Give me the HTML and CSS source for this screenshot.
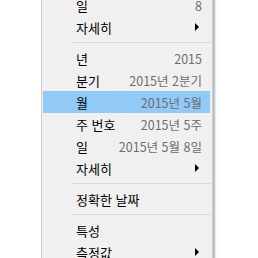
FILE: index.html
```html
<!DOCTYPE html>
<html lang="ko">
<head>
    <meta charset="UTF-8">
    <title>날짜 메뉴</title>
    <link rel="stylesheet" href="styles.css">
</head>
<body>
    <div class="menu">
        <div class="item"><span class="label">일</span><span class="value">8</span></div>
        <div class="item"><span class="label">자세히</span><span class="arrow"></span></div>
        <div class="separator"></div>
        <div class="item"><span class="label">년</span><span class="value">2015</span></div>
        <div class="item"><span class="label">분기</span><span class="value">2015년 2분기</span></div>
        <div class="item active"><span class="label">월</span><span class="value">2015년 5월</span></div>
        <div class="item"><span class="label">주 번호</span><span class="value">2015년 5주</span></div>
        <div class="item"><span class="label">일</span><span class="value">2015년 5월 8일</span></div>
        <div class="item"><span class="label">자세히</span><span class="arrow"></span></div>
        <div class="separator"></div>
        <div class="item"><span class="label">정확한 날짜</span></div>
        <div class="separator"></div>
        <div class="item"><span class="label">특성</span></div>
        <div class="item"><span class="label">측정값</span><span class="arrow"></span></div>
    </div>
</body>
</html>
```

FILE: styles.css
```css
* {
    margin: 0;
    padding: 0;
    box-sizing: border-box;
}

body {
    background-color: #ffffff;
    font-family: "Noto Sans CJK KR", "Noto Sans", sans-serif;
    font-size: 13px;
    overflow: hidden;
}

.menu {
    width: 172px;
    margin: -7px 0 0 41px;
    background-color: #f0f0f0;
    border: 1px solid #cccccc;
    box-shadow: 2px 2px 2px rgba(0, 0, 0, 0.3);
}

.item {
    display: flex;
    align-items: center;
    height: 22px;
    margin: 0 2px 0 1px;
    padding: 0 8px 0 33px;
    color: #000000;
}

.item.active {
    background-color: #91c9f7;
}

.label {
    flex: 1;
    white-space: nowrap;
}

.value {
    color: #6d6d6d;
    font-size: 12.5px;
    white-space: nowrap;
}

.arrow {
    width: 0;
    height: 0;
    margin-right: 3px;
    border-top: 4px solid transparent;
    border-bottom: 4px solid transparent;
    border-left: 4px solid #000000;
}

.separator {
    height: 1px;
    margin: 4px 1px 4px 29px;
    background-color: #d7d7d7;
}
```
